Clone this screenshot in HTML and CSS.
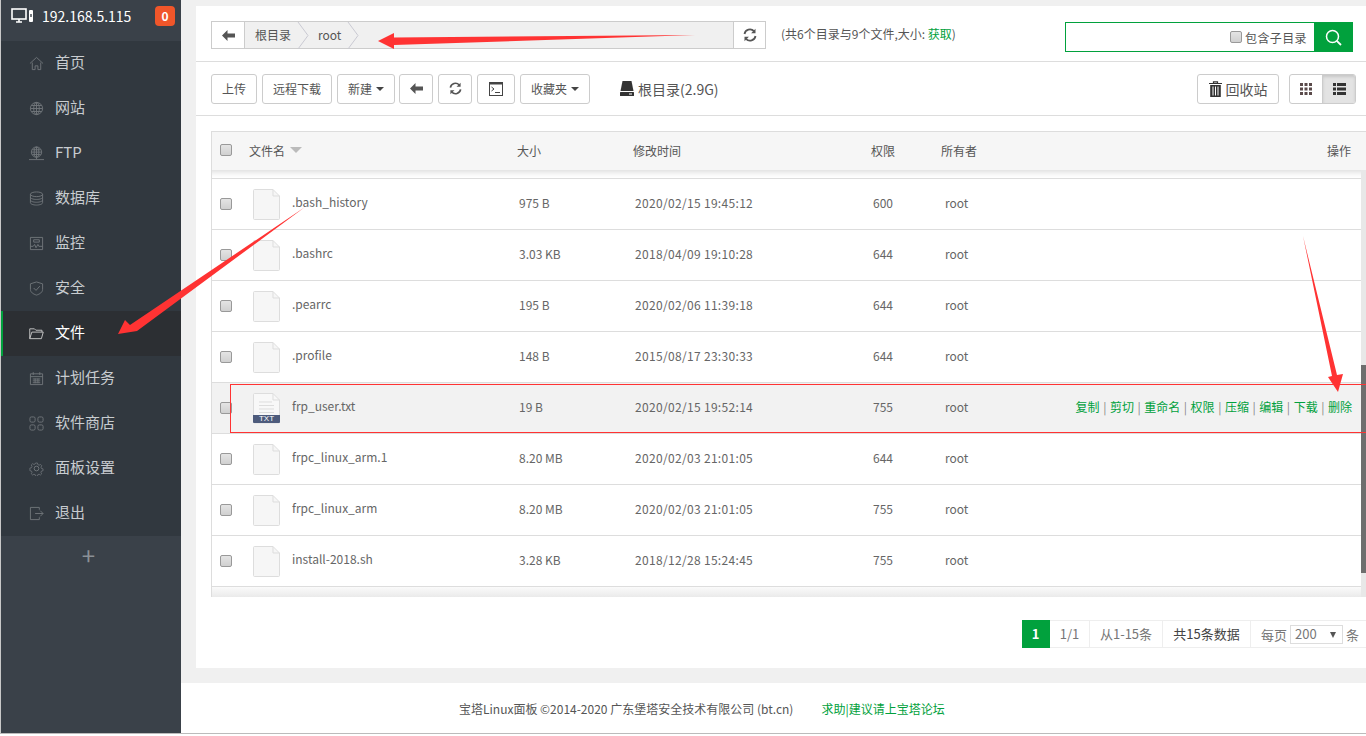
FILE: index.html
```html
<!DOCTYPE html>
<html lang="zh-CN">
<head>
    <meta charset="UTF-8">
    <title>文件管理</title>
    <link rel="stylesheet" href="styles.css">
</head>
<body>
    <div class="page">
        <!-- 侧边栏 -->
        <aside class="sidebar">
            <div class="side-head">
                <svg class="host-icon" width="23" height="16" viewBox="0 0 23 16"><rect x="1" y="1" width="14" height="10" fill="none" stroke="#fff" stroke-width="1.6"/><path d="M5 14h6M8 11v3" stroke="#fff" stroke-width="1.6"/><rect x="18" y="2" width="4" height="12" rx="1" fill="#fff"/><path d="M20 6v3" stroke="#3a4149" stroke-width="1.4"/></svg>
                <span class="host-ip">192.168.5.115</span>
                <span class="badge">0</span>
            </div>
            <nav class="menu">
                <a class="menu-item"><svg viewBox="0 0 16 16"><path d="M1 8l7-6.500L15 8M3.500 7v7.500h3v-4h3v4h3V7"/></svg><span>首页</span></a>
                <a class="menu-item"><svg viewBox="0 0 16 16"><circle cx="8" cy="8" r="6.500"/><ellipse cx="8" cy="8" rx="3" ry="6.500"/><path d="M8 1.500v13M1.500 8h13M2.500 4.800h11M2.500 11.200h11"/></svg><span>网站</span></a>
                <a class="menu-item"><svg viewBox="0 0 16 16"><circle cx="8" cy="6.500" r="5.500"/><ellipse cx="8" cy="6.500" rx="2.500" ry="5.500"/><path d="M8 1v11M2.500 6.500h11M3.500 4h9M3.500 9h9M8 12v2M0 14.500h16"/></svg><span>FTP</span></a>
                <a class="menu-item"><svg viewBox="0 0 16 16"><ellipse cx="8" cy="3.500" rx="6.500" ry="2.500"/><path d="M1.500 3.500v9c0 1.400 3 2.500 6.500 2.500s6.500-1.100 6.500-2.500v-9M1.500 6.500C1.500 8 4.500 9 8 9s6.500-1 6.500-2.500M1.500 9.500c0 1.500 3 2.500 6.500 2.500s6.500-1 6.500-2.500"/></svg><span>数据库</span></a>
                <a class="menu-item"><svg viewBox="0 0 16 16"><path d="M1.500 1.500h13v13h-13zM1.500 11h3l1.500-2 1.500 3.500L9.500 9l1 2h4M5 4h6v2.500H5z"/></svg><span>监控</span></a>
                <a class="menu-item"><svg viewBox="0 0 16 16"><path d="M8 1l6.500 2v6c0 3-3 5-6.500 6-3.500-1-6.500-3-6.500-6V3zM5 7.500L7.500 10 11.500 5.500"/></svg><span>安全</span></a>
                <a class="menu-item active"><svg viewBox="0 0 16 16"><path d="M.8 13.500V3h5l1.500 1.500h6.500v2M.8 13.500h12.400l2-7H3z"/></svg><span>文件</span></a>
                <a class="menu-item"><svg viewBox="0 0 16 16"><path d="M1.500 3h13v11.500h-13zM1.500 6h13M4.500 1.200v3M11.500 1.200v3M4 8.500h8M4 10.500h8M4 12.500h8M6.500 8v5M9.500 8v5"/></svg><span>计划任务</span></a>
                <a class="menu-item"><svg viewBox="0 0 16 16"><rect x="1" y="1" width="5.500" height="5.500" rx="1.500"/><rect x="9.500" y="1" width="5.500" height="5.500" rx="1.500"/><rect x="1" y="9.500" width="5.500" height="5.500" rx="1.500"/><rect x="9.500" y="9.500" width="5.500" height="5.500" rx="1.500"/></svg><span>软件商店</span></a>
                <a class="menu-item"><svg viewBox="0 0 16 16"><circle cx="8" cy="8" r="2.500"/><path d="M6.800 1h2.400l.4 2 1.700.8 1.800-1 1.600 1.700-1.100 1.700.7 1.800 2 .4v2.400l-2 .4-.7 1.700 1 1.800-1.600 1.500-1.700-1-1.700.7-.4 2H6.800l-.4-2-1.700-.7-1.700 1-1.700-1.600 1-1.700-.7-1.700-2-.4V7.400l2-.4.700-1.800-1-1.700 1.700-1.600 1.700 1 1.700-.8z" transform="translate(1.300 1.300) scale(.84)"/></svg><span>面板设置</span></a>
                <a class="menu-item"><svg viewBox="0 0 16 16"><path d="M11 4V1.500H1.500v13H11V12M6.500 8H15M12 5l3 3-3 3"/></svg><span>退出</span></a>
            </nav>
            <div class="side-add">+</div>
        </aside>

        <main class="main">
            <section class="panel">
                <div class="path-row">
                    <div class="path-bar">
                        <span class="path-btn"><svg width="13" height="11" viewBox="0 0 13 11"><path d="M0 5.500L5.500 0v3.500H13v4H5.500V11z" fill="#555"/></svg></span>
                        <div class="crumbs">
                            <span class="crumb">根目录</span>
                            <svg class="chevron" width="12" height="27" viewBox="0 0 12 27"><path d="M1 0l10 13.500L1 27" fill="none" stroke="#c9c9d2"/></svg>
                            <span class="crumb">root</span>
                            <svg class="chevron" width="12" height="27" viewBox="0 0 12 27"><path d="M1 0l10 13.500L1 27" fill="none" stroke="#c9c9d2"/></svg>
                        </div>
                        <span class="path-btn refresh"><svg width="14" height="14" viewBox="0 0 14 14"><path d="M1.500 6A5.500 5.500 0 0 1 11 3.200M12.500 8A5.500 5.500 0 0 1 3 10.800" fill="none" stroke="#555" stroke-width="1.800"/><path d="M12.500 .8v4.400H8.100zM1.500 13.200V8.800h4.400z" fill="#555"/></svg></span>
                    </div>
                    <span class="path-info">(共6个目录与9个文件,大小: <a class="green">获取</a>)</span>
                    <div class="search">
                        <label class="search-box"><span class="check"></span>包含子目录</label>
                        <span class="search-btn"><svg width="17" height="17" viewBox="0 0 17 17"><circle cx="7.500" cy="7.500" r="6" fill="none" stroke="#fff" stroke-width="1.500"/><path d="M11.800 11.800L16 16" stroke="#fff" stroke-width="1.800"/></svg></span>
                    </div>
                </div>

                <div class="toolbar">
                    <a class="btn">上传</a>
                    <a class="btn">远程下载</a>
                    <a class="btn btn-new">新建<i class="caret"></i></a>
                    <a class="btn icon-btn"><svg width="13" height="11" viewBox="0 0 13 11"><path d="M0 5.500L5.500 0v3.500H13v4H5.500V11z" fill="#555"/></svg></a>
                    <a class="btn icon-btn"><svg width="13" height="13" viewBox="0 0 14 14"><path d="M1.500 6A5.500 5.500 0 0 1 11 3.200M12.500 8A5.500 5.500 0 0 1 3 10.800" fill="none" stroke="#555" stroke-width="1.800"/><path d="M12.500 .8v4.400H8.100zM1.500 13.200V8.800h4.400z" fill="#555"/></svg></a>
                    <a class="btn term-btn"><svg width="14" height="14" viewBox="0 0 14 14"><rect x=".5" y=".5" width="13" height="13" fill="none" stroke="#444"/><path d="M0 0h14v2.500H0z" fill="#444"/><path d="M2.500 5l2.500 2-2.500 2M6 10.500h5" fill="none" stroke="#444"/></svg></a>
                    <a class="btn">收藏夹<i class="caret"></i></a>
                    <span class="disk"><svg width="14" height="15" viewBox="0 0 14 15"><path d="M2.500 0h9L13.500 10H.5z" fill="#333"/><rect x="0" y="11" width="14" height="4" rx=".5" fill="#333"/><path d="M9 13h3" stroke="#fff"/></svg>根目录(2.9G)</span>
                    <a class="btn recycle"><svg width="13" height="16" viewBox="0 0 13 16"><path d="M0 2.500h13M4.500 2.500V.8h4v1.700" fill="none" stroke="#333" stroke-width="1.200"/><path d="M1.200 4h10.600v12H1.200z" fill="#333"/><path d="M4 5.500V14.500M6.500 5.500V14.500M9 5.500V14.500" stroke="#fff"/></svg>回收站</a>
                    <div class="view-group">
                        <a class="view-btn"><svg width="12" height="12" viewBox="0 0 12 12"><path d="M0 0h3v3H0zM4.500 0h3v3h-3zM9 0h3v3H9zM0 4.500h3v3H0zM4.500 4.500h3v3h-3zM9 4.500h3v3H9zM0 9h3v3H0zM4.500 9h3v3h-3zM9 9h3v3H9z" fill="#5a4a4a"/></svg></a>
                        <a class="view-btn active"><svg width="13" height="12" viewBox="0 0 13 12"><path d="M0 0h3v3H0zM4 0h9v3H4zM0 4.500h3v3H0zM4 4.500h9v3H4zM0 9h3v3H0zM4 9h9v3H4z" fill="#333"/></svg></a>
                    </div>
                </div>

                <div class="table">
                    <div class="thead">
                        <span class="check"></span>
                        <span class="th-name">文件名<i class="sort"></i></span>
                        <span>大小</span>
                        <span>修改时间</span>
                        <span>权限</span>
                        <span>所有者</span>
                        <span class="th-ops">操作</span>
                    </div>
                    <div class="tbody">
                        <div class="row">
                            <span class="check"></span>
                            <svg class="file" viewBox="0 0 27 31"><path d="M.5 1.500a1 1 0 0 1 1-1H20L26.500 7v22.500a1 1 0 0 1-1 1h-24a1 1 0 0 1-1-1z" fill="#f6f6f6" stroke="#ddd"/><path d="M20 .5V7h6.500" fill="none" stroke="#ddd"/></svg>
                            <span class="name">.bash_history</span><span class="cell">975 B</span><span class="cell date">2020/02/15 19:45:12</span><span class="cell">600</span><span class="cell">root</span>
                        </div>
                        <div class="row">
                            <span class="check"></span>
                            <svg class="file" viewBox="0 0 27 31"><path d="M.5 1.500a1 1 0 0 1 1-1H20L26.500 7v22.500a1 1 0 0 1-1 1h-24a1 1 0 0 1-1-1z" fill="#f6f6f6" stroke="#ddd"/><path d="M20 .5V7h6.500" fill="none" stroke="#ddd"/></svg>
                            <span class="name">.bashrc</span><span class="cell">3.03 KB</span><span class="cell date">2018/04/09 19:10:28</span><span class="cell">644</span><span class="cell">root</span>
                        </div>
                        <div class="row">
                            <span class="check"></span>
                            <svg class="file" viewBox="0 0 27 31"><path d="M.5 1.500a1 1 0 0 1 1-1H20L26.500 7v22.500a1 1 0 0 1-1 1h-24a1 1 0 0 1-1-1z" fill="#f6f6f6" stroke="#ddd"/><path d="M20 .5V7h6.500" fill="none" stroke="#ddd"/></svg>
                            <span class="name">.pearrc</span><span class="cell">195 B</span><span class="cell date">2020/02/06 11:39:18</span><span class="cell">644</span><span class="cell">root</span>
                        </div>
                        <div class="row">
                            <span class="check"></span>
                            <svg class="file" viewBox="0 0 27 31"><path d="M.5 1.500a1 1 0 0 1 1-1H20L26.500 7v22.500a1 1 0 0 1-1 1h-24a1 1 0 0 1-1-1z" fill="#f6f6f6" stroke="#ddd"/><path d="M20 .5V7h6.500" fill="none" stroke="#ddd"/></svg>
                            <span class="name">.profile</span><span class="cell">148 B</span><span class="cell date">2015/08/17 23:30:33</span><span class="cell">644</span><span class="cell">root</span>
                        </div>
                        <div class="row hover">
                            <span class="check"></span>
                            <span class="file txt-file">
                                <svg viewBox="0 0 27 31"><path d="M.5 1.500a1 1 0 0 1 1-1H20L26.500 7v22a1 1 0 0 1-1 1h-24a1 1 0 0 1-1-1z" fill="#f8f8f8" stroke="#ddd"/><path d="M20 .5V7h6.500" fill="none" stroke="#ddd"/><path d="M6 9h13M6 12.500h15M6 16h15M6 19.500h15" stroke="#ddd"/></svg>
                                <b class="txt-label">TXT</b>
                            </span>
                            <span class="name">frp_user.txt</span><span class="cell">19 B</span><span class="cell date">2020/02/15 19:52:14</span><span class="cell">755</span><span class="cell">root</span>
                            <span class="ops"><a>复制</a> | <a>剪切</a> | <a>重命名</a> | <a>权限</a> | <a>压缩</a> | <a>编辑</a> | <a>下载</a> | <a>删除</a></span>
                        </div>
                        <div class="row">
                            <span class="check"></span>
                            <svg class="file" viewBox="0 0 27 31"><path d="M.5 1.500a1 1 0 0 1 1-1H20L26.500 7v22.500a1 1 0 0 1-1 1h-24a1 1 0 0 1-1-1z" fill="#f6f6f6" stroke="#ddd"/><path d="M20 .5V7h6.500" fill="none" stroke="#ddd"/></svg>
                            <span class="name">frpc_linux_arm.1</span><span class="cell">8.20 MB</span><span class="cell date">2020/02/03 21:01:05</span><span class="cell">644</span><span class="cell">root</span>
                        </div>
                        <div class="row">
                            <span class="check"></span>
                            <svg class="file" viewBox="0 0 27 31"><path d="M.5 1.500a1 1 0 0 1 1-1H20L26.500 7v22.500a1 1 0 0 1-1 1h-24a1 1 0 0 1-1-1z" fill="#f6f6f6" stroke="#ddd"/><path d="M20 .5V7h6.500" fill="none" stroke="#ddd"/></svg>
                            <span class="name">frpc_linux_arm</span><span class="cell">8.20 MB</span><span class="cell date">2020/02/03 21:01:05</span><span class="cell">755</span><span class="cell">root</span>
                        </div>
                        <div class="row">
                            <span class="check"></span>
                            <svg class="file" viewBox="0 0 27 31"><path d="M.5 1.500a1 1 0 0 1 1-1H20L26.500 7v22.500a1 1 0 0 1-1 1h-24a1 1 0 0 1-1-1z" fill="#f6f6f6" stroke="#ddd"/><path d="M20 .5V7h6.500" fill="none" stroke="#ddd"/></svg>
                            <span class="name">install-2018.sh</span><span class="cell">3.28 KB</span><span class="cell date">2018/12/28 15:24:45</span><span class="cell">755</span><span class="cell">root</span>
                        </div>
                        <div class="row">
                            <span class="check"></span>
                            <svg class="file" viewBox="0 0 27 31"><path d="M.5 1.500a1 1 0 0 1 1-1H20L26.500 7v22.500a1 1 0 0 1-1 1h-24a1 1 0 0 1-1-1z" fill="#f6f6f6" stroke="#ddd"/></svg>
                        </div>
                        <div class="fade"></div>
                        <div class="scrollbar"><div class="thumb"></div></div>
                    </div>
                </div>

                <div class="pager">
                    <span class="page-cell current">1</span>
                    <span class="page-cell w40">1/1</span>
                    <span class="page-cell w73">从1-15条</span>
                    <span class="page-cell w88 dark">共15条数据</span>
                    <span class="page-size">每页<span class="select">200<i class="select-arrow"></i></span>条</span>
                </div>
            </section>

            <footer class="footer">
                <span>宝塔Linux面板 ©2014-2020 广东堡塔安全技术有限公司 (bt.cn)</span>
                <a class="green">求助|建议请上宝塔论坛</a>
            </footer>
        </main>

        <!-- 截图上的红色标注 -->
        <svg class="marks" width="1366" height="736" viewBox="0 0 1366 736">
            <path d="M378 41L394 33V37.500L695 35L394 45V49Z" fill="#f33"/>
            <path d="M305 207L137 331L118 334L125 320L130 325Z" fill="#f33"/>
            <path d="M1303 236L1337 375L1343 374L1338 392L1328 377L1332 376Z" fill="#f33"/>
            <rect x="230.500" y="384.500" width="1140" height="48" fill="none" stroke="#f33"/>
        </svg>
    </div>
</body>
</html>
```

FILE: styles.css
```css
* {
    box-sizing: border-box;
}

body {
    margin: 0;
    background-color: #fff;
    font-family: "Noto Sans CJK SC", "Noto Sans", sans-serif;
    font-size: 12px;
    color: #666;
    overflow: hidden;
}

a {
    text-decoration: none;
}

.green {
    color: #01a13d;
}

.page {
    position: relative;
    display: flex;
    width: 1366px;
    height: 734px;
    background-color: #f0f0f0;
    border-bottom: 1px solid #bbb;
}

/* sidebar */
.sidebar {
    width: 181px;
    flex: none;
    display: flex;
    flex-direction: column;
    background-color: #3a4149;
    border-left: 1px solid #c8c8c8;
}

.side-head {
    height: 41px;
    display: flex;
    align-items: center;
    padding: 0 6px 10px 10px;
    color: #fff;
}

.host-icon {
    flex: none;
}

.host-ip {
    margin-left: 8px;
    font-size: 14px;
    flex: 1;
}

.badge {
    width: 20px;
    height: 20px;
    border-radius: 4px;
    background-color: #f0562a;
    color: #fff;
    font-size: 12px;
    font-weight: bold;
    text-align: center;
    line-height: 20px;
}

.menu {
    background-color: #31383f;
}

.menu-item {
    height: 45px;
    display: flex;
    align-items: center;
    padding-left: 28px;
    font-size: 15px;
    color: #c8ccd0;
}

.menu-item span {
    margin-bottom: 4px;
}

.menu-item svg {
    width: 15px;
    height: 15px;
    margin-right: 11px;
    margin-bottom: 1px;
    fill: none;
    stroke: #70757a;
    stroke-width: 1;
}

.menu-item.active {
    background-color: #2c2f33;
    color: #fff;
    box-shadow: inset 2px 0 0 #01a13d;
}

.menu-item.active svg {
    stroke: #c8c8c8;
}

.side-add {
    height: 41px;
    padding-right: 5px;
    text-align: center;
    font-size: 24px;
    line-height: 38px;
    color: #8a9096;
}

/* main */
.main {
    flex: 1;
    display: flex;
    flex-direction: column;
    padding-top: 6px;
    min-width: 0;
}

.panel {
    margin-left: 15px;
    height: 662px;
    background-color: #fff;
    overflow: hidden;
}

.path-row {
    height: 56px;
    display: flex;
    align-items: flex-start;
    padding: 15px 13px 0 15px;
    border-bottom: 1px solid #ddd;
}

.path-bar {
    width: 555px;
    height: 28px;
    display: flex;
    border: 1px solid #ccc;
    background-color: #f0f0f0;
}

.path-btn {
    width: 33px;
    flex: none;
    display: flex;
    align-items: center;
    justify-content: center;
    background-color: #fff;
    border-right: 1px solid #ccc;
}

.path-btn.refresh {
    width: 32px;
    border-right: 0;
    border-left: 1px solid #ccc;
}

.crumbs {
    flex: 1;
    display: flex;
    align-items: center;
    padding-left: 10px;
    color: #555;
}

.crumb {
    margin-bottom: 2px;
}

.chevron {
    margin: 0 9px 0 6px;
}

.path-info {
    margin-left: 15px;
    margin-top: 4px;
    color: #555;
}

.search {
    margin-left: auto;
    display: flex;
    margin-top: 1px;
    height: 30px;
}

.search-box {
    width: 249px;
    display: flex;
    align-items: center;
    justify-content: flex-end;
    padding-right: 7px;
    border: 1px solid #01a13d;
    border-right: 0;
    color: #555;
    letter-spacing: 0.4px;
}

.search-box .check {
    margin-right: 3px;
}

.search-btn {
    width: 39px;
    display: flex;
    align-items: center;
    justify-content: center;
    background-color: #01a13d;
}

.check {
    display: inline-block;
    width: 12px;
    height: 12px;
    flex: none;
    margin-bottom: 1px;
    border: 1px solid #999;
    border-radius: 2px;
    background: linear-gradient(#e4e4e4, #d0d0d0);
}

.toolbar {
    height: 54px;
    display: flex;
    align-items: center;
    padding: 0 10px 0 15px;
    border-bottom: 1px solid #ddd;
}

.btn {
    height: 30px;
    display: flex;
    align-items: center;
    justify-content: center;
    padding: 0 10px;
    margin-right: 5px;
    border: 1px solid #ccc;
    border-radius: 3px;
    background-color: #fff;
    color: #555;
}

.btn-new {
    margin-right: 4px;
}

.icon-btn {
    width: 34px;
    padding: 0;
}

.term-btn {
    width: 38px;
    padding: 0;
}

.caret {
    margin-left: 4px;
    border-top: 4px solid #444;
    border-left: 4px solid transparent;
    border-right: 4px solid transparent;
}

.disk {
    display: flex;
    align-items: center;
    gap: 4px;
    margin-left: 25px;
    font-size: 14px;
    color: #555;
}

.recycle {
    margin-left: auto;
    margin-right: 10px;
    width: 82px;
    padding: 0;
    gap: 4px;
    font-size: 14px;
}

.view-group {
    display: flex;
    height: 30px;
    border: 1px solid #ccc;
    border-radius: 3px;
    overflow: hidden;
}

.view-btn {
    width: 32px;
    display: flex;
    align-items: center;
    justify-content: center;
}

.view-btn.active {
    width: 33px;
    background-color: #e3e3e3;
    border-left: 1px solid #ccc;
    box-shadow: inset 0 2px 3px rgba(0, 0, 0, 0.12);
}

.table {
    margin: 15px 0 0 15px;
    border-left: 1px solid #ddd;
}

.thead {
    height: 39px;
    display: grid;
    grid-template-columns: 29px 268px 116px 238px 70px 1fr auto;
    align-items: center;
    padding: 0 15px 2px 8px;
    background-color: #f6f6f6;
    border-top: 1px solid #ddd;
    color: #555;
}

.thead .check {
    margin-top: 1px;
}

.th-name {
    display: flex;
    align-items: center;
}

.sort {
    margin-left: 5px;
    border-top: 6px solid #bbb;
    border-left: 6px solid transparent;
    border-right: 6px solid transparent;
}

.tbody {
    position: relative;
    height: 427px;
    overflow: hidden;
    padding-top: 8px;
    box-shadow: inset 0 8px 6px -6px rgba(0, 0, 0, 0.15);
}

.row {
    height: 51px;
    display: grid;
    grid-template-columns: 33px 39px 227px 116px 238px 72px 60px 1fr;
    align-items: center;
    padding: 0 14px 0 8px;
    border-top: 1px solid #ddd;
}

.row.hover {
    background-color: #f2f2f2;
}

.name {
    color: #666;
    padding-bottom: 6px;
}

.cell {
    padding-bottom: 4px;
}

.date {
    letter-spacing: 0.32px;
}

.file {
    display: block;
    width: 27px;
    height: 31px;
}

.txt-file {
    position: relative;
}

.txt-file svg {
    display: block;
    width: 27px;
    height: 31px;
}

.txt-label {
    position: absolute;
    left: 0;
    right: 0;
    bottom: 1px;
    height: 8px;
    border-radius: 0 0 1px 1px;
    background-color: #4d5b7c;
    color: #fff;
    font-family: "Liberation Sans", sans-serif;
    font-size: 8px;
    font-weight: normal;
    line-height: 8px;
    text-align: center;
}

.ops {
    padding-bottom: 4px;
    text-align: right;
    color: #888;
    white-space: nowrap;
    word-spacing: 0.85px;
}

.ops a {
    color: #01a13d;
}

.scrollbar {
    position: absolute;
    top: 0;
    right: 0;
    width: 5px;
    height: 100%;
    background-color: #e8e8e8;
}

.thumb {
    margin-top: 195px;
    height: 208px;
    background-color: #6e6e6e;
}

.fade {
    position: absolute;
    left: 0;
    right: 0;
    bottom: 0;
    height: 10px;
    background: linear-gradient(#fafafa, #e9e9e9);
    opacity: 0.95;
}

.pager {
    display: flex;
    align-items: stretch;
    justify-content: flex-end;
    height: 28px;
    margin-top: 23px;
    font-size: 13px;
    color: #777;
}

.page-cell {
    display: flex;
    align-items: center;
    justify-content: center;
    padding-bottom: 2px;
    background-color: #fff;
    border: 1px solid #eee;
    border-left: 0;
}

.page-cell.current {
    width: 28px;
    background-color: #01a13d;
    border-color: #01a13d;
    color: #fff;
    font-weight: bold;
}

.w40 {
    width: 40px;
}

.w73 {
    width: 73px;
}

.w88 {
    width: 88px;
}

.dark {
    color: #444;
}

.page-size {
    width: 115px;
    display: flex;
    align-items: center;
    gap: 3px;
    padding-left: 10px;
    border: 1px solid #eee;
    border-width: 1px 0;
}

.select {
    position: relative;
    width: 53px;
    height: 19px;
    padding-left: 4px;
    line-height: 16px;
    border: 1px solid #ddd;
}

.select-arrow {
    position: absolute;
    top: 6px;
    right: 6px;
    border-top: 6px solid #555;
    border-left: 3px solid transparent;
    border-right: 3px solid transparent;
}

.footer {
    height: 50px;
    margin-top: 15px;
    display: flex;
    align-items: center;
    gap: 28px;
    padding-left: 278px;
    background-color: #fff;
    color: #555;
}

/* annotations drawn on the screenshot */
.marks {
    position: absolute;
    left: 0;
    top: 0;
    pointer-events: none;
}
```
